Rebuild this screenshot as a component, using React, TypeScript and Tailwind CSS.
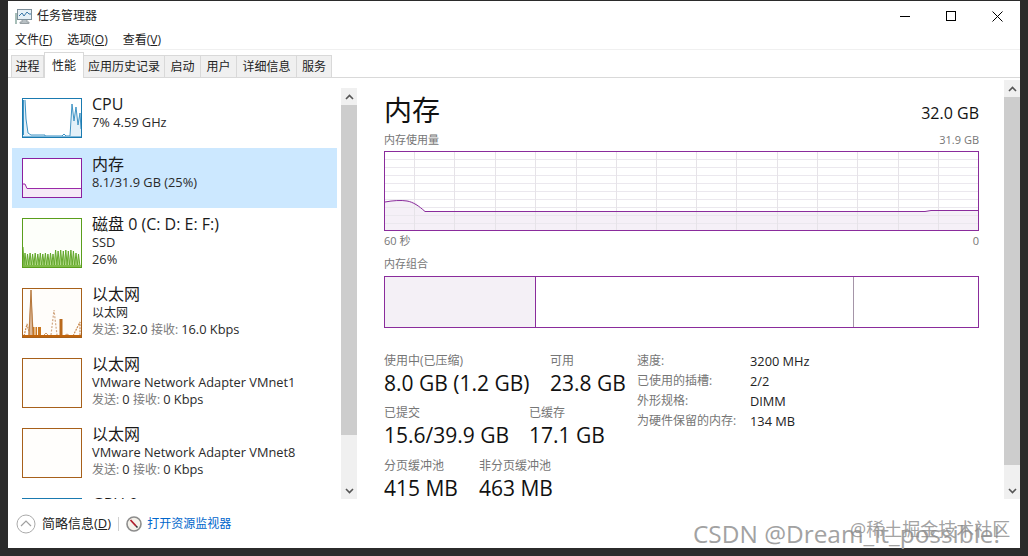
import React from 'react';

const FONT = '"Open Sans", "Noto Sans", "Noto Sans CJK SC", sans-serif';

const tabs = [
  { label: '进程', w: 'w-[33px]' },
  { label: '性能', w: 'w-[40px]', active: true },
  { label: '应用历史记录', w: 'w-[81px]' },
  { label: '启动', w: 'w-[36px]' },
  { label: '用户', w: 'w-[36px]' },
  { label: '详细信息', w: 'w-[60px]' },
  { label: '服务', w: 'w-[35px]' },
];

const AppIcon = () => (
  <svg width="18" height="17" viewBox="0 0 18 17" fill="none">
    <rect x="2.5" y="1.5" width="14" height="10" fill="#e6f0f6" stroke="#7d8f9a" />
    <path d="M4 8l3-3 2 3 3-4 2 2h2" stroke="#3a78a8" strokeWidth="1" />
    <path d="M1 5v11" stroke="#8aa8a0" strokeWidth="1.5" />
    <path d="M7 12v2H5v1.5h9V14h-2v-2" fill="#b8c0c4" stroke="#98a0a4" />
  </svg>
);

const CollapseIcon = () => (
  <svg width="20" height="20" viewBox="0 0 20 20" fill="none">
    <circle cx="10" cy="10" r="9" stroke="#ababab" strokeWidth="1" />
    <path d="M5 12l5-5 5 5" stroke="#a0a0a0" strokeWidth="1.2" />
  </svg>
);

const MonitorIcon = () => (
  <svg width="16" height="16" viewBox="0 0 16 16" fill="none">
    <circle cx="8" cy="8" r="7" fill="#f4f1ea" stroke="#8c8c8c" strokeWidth="1.6" />
    <path d="M4.5 4L10 10" stroke="#b01e2c" strokeWidth="1.8" />
    <path d="M10 10l1.5 1.5" stroke="#30343a" strokeWidth="1.6" />
  </svg>
);

const Spark = ({ h, border, bg, children }: { h: string; border: string; bg: string; children?: React.ReactNode }) => (
  <div className={`w-[60px] ${h} border ${border} ${bg} shrink-0 overflow-hidden`}>{children}</div>
);

const CpuSpark = () => (
  <svg width="58" height="38" viewBox="0 0 58 38" className="block">
    <path d="M0 1L2 1L3 20L5 36L48 37L49 5L51 22L53 8L55 26L57 14L58 30V38H0Z" fill="#e3f0f8" />
    <path d="M0.5 1V36M2 1L3 20L5 34L8 36H22V37H39L41 35L43 37H47L49 5L51 22L53 8L55 26L57 14L58 30" stroke="#3f93c4" strokeWidth="1" fill="none" />
    <path d="M0 37.5H58" stroke="#7db8da" strokeWidth="1" />
  </svg>
);

const MemSpark = () => (
  <svg width="58" height="38" viewBox="0 0 58 38" className="block">
    <path d="M0 25L2 25L4 29H58V38H0Z" fill="#f5e9f7" />
    <path d="M0 25L2 25L4 29.5H58" stroke="#9a2aa8" strokeWidth="1" fill="none" />
  </svg>
);

const DiskSpark = () => {
  let top = 'M0 28L1 46';
  for (let i = 0; i < 22; i++) {
    const x = 2 + i * 2.55;
    const peak = i > 11 && i < 20 ? 31 + (i % 2) : 34 + (i % 2);
    top += `L${x.toFixed(1)} ${peak}L${(x + 1.3).toFixed(1)} 46`;
  }
  return (
    <svg width="58" height="48" viewBox="0 0 58 48" className="block">
      <path d={`${top}V48H0Z`} fill="#b4dc8c" />
      <path d={top} stroke="#64a82c" strokeWidth="1" fill="none" />
      <path d="M0 47H58" stroke="#6eb030" strokeWidth="1.5" />
    </svg>
  );
};

const EthSpark = () => (
  <svg width="58" height="48" viewBox="0 0 58 48" className="block">
    <path d="M5 48L8 1L11 48Z" fill="#dcb898" />
    <path d="M6 47L8 1L10 47" stroke="#b5763a" strokeWidth="1" fill="none" />
    <path d="M10 48V38H18V48Z" fill="#c9761e" />
    <path d="M12 38V48M14.5 38V48" stroke="#fff6ea" strokeWidth="1" />
    <path d="M36.5 48V30H39.5V48Z" fill="#b9691c" />
    <path d="M28 46L31 21L34 46" stroke="#d2a884" strokeWidth="1.2" strokeDasharray="2 1.5" fill="none" />
    <path d="M1 47L4 35L7 47M50 47L53 41L57 33V47" stroke="#c98a50" strokeWidth="1.2" strokeDasharray="2 1" fill="none" />
    <path d="M20 47L23 44L26 47M41 47L44 45L47 47" stroke="#d09a68" strokeWidth="1" fill="none" />
    <path d="M0 47H58" stroke="#c0640c" strokeWidth="2" />
  </svg>
);

const ListItem = ({ spark, h, title, lines, selected }: { spark: React.ReactNode; h: string; title: string; lines: React.ReactNode[]; selected?: boolean }) => (
  <div className={`flex ${h} w-[325px] pl-[10px] pt-[10px] gap-[10px] ${selected ? 'bg-[#cce8ff]' : ''}`}>
    {spark}
    <div className="-mt-[4px] text-[12.8px] leading-[17px] text-[#2a2a2a]">
      <div className="text-[16px] leading-[20px] text-[#1a1a1a]">{title}</div>
      {lines.map((l, i) => (
        <div key={i} className="whitespace-nowrap">{l}</div>
      ))}
    </div>
  </div>
);

const Rate = ({ tx, rx }: { tx: string; rx: string }) => (
  <span>
    <span className="text-[#7a7a7a] text-[12px]">发送: </span>{tx} <span className="text-[#7a7a7a] text-[12px]">接收: </span>{rx} Kbps
  </span>
);

const MemoryGraph = () => {
  const vs = [29, 69, 110, 150, 191, 231, 271, 311, 351, 392, 432, 472, 513, 553];
  const hs = [7, 15, 23, 31, 39, 47, 55, 63, 71];
  return (
    <svg width="593" height="78" viewBox="0 0 593 78" className="block">
      <path d="M0 50L10 49L22 48L30 50L40 59H545L593 58V78H0Z" fill="#f5f0f7" />
      {hs.map((y) => (
        <path key={y} d={`M0 ${y + 0.5}H593`} stroke="#ebe8ee" strokeWidth="1" />
      ))}
      {vs.map((x) => (
        <path key={x} d={`M${x + 0.5} 0V78`} stroke="#e6e3e8" strokeWidth="1" />
      ))}
      <path d="M0 50C8 48.5 16 48 22 49C28 50 34 54 40 59.5H540L546 58.5H593" stroke="#8a2c9c" strokeWidth="1" fill="none" />
    </svg>
  );
};

const Stat = ({ label, value, w }: { label: string; value: string; w: string }) => (
  <div className={w}>
    <div className="text-[12px] leading-[16px] text-[#767676] whitespace-nowrap">{label}</div>
    <div className="text-[21px] leading-[29px] text-[#111] whitespace-nowrap">{value}</div>
  </div>
);

const specs = [
  ['速度:', '3200 MHz'],
  ['已使用的插槽:', '2/2'],
  ['外形规格:', 'DIMM'],
  ['为硬件保留的内存:', '134 MB'],
];

export default function App() {
  return (
    <div className="relative w-[1028px] h-[556px] overflow-hidden bg-[#2b2b2b] pl-2 pt-[1px]" style={{ fontFamily: FONT }}>
      <div className="relative w-[1012px] h-[547px] bg-white flex flex-col">
        {/* title bar */}
        <div className="flex items-center h-[29px] pt-[1px] pl-[7px] shrink-0">
          <AppIcon />
          <span className="ml-[4px] text-[12px] text-[#222]">任务管理器</span>
          <div className="ml-auto flex items-center text-black">
            <div className="w-[46px] h-[28px] flex items-center justify-center">
              <div className="w-[10px] h-px bg-black" />
            </div>
            <div className="w-[46px] h-[28px] flex items-center justify-center">
              <div className="w-[10px] h-[10px] border border-black" />
            </div>
            <div className="w-[46px] h-[28px] flex items-center justify-center">
              <svg width="11" height="11" viewBox="0 0 11 11"><path d="M0.5 0.5L10.5 10.5M10.5 0.5L0.5 10.5" stroke="#000" strokeWidth="1" /></svg>
            </div>
          </div>
        </div>
        {/* menu */}
        <div className="flex h-[20px] items-center pl-[7px] gap-[15px] text-[12px] text-[#222] shrink-0 border-b border-[#f0f0f0]">
          <span>文件(<span className="underline">F</span>)</span>
          <span>选项(<span className="underline">O</span>)</span>
          <span>查看(<span className="underline">V</span>)</span>
        </div>
        {/* tabs */}
        <div className="flex items-end h-[28px] pl-[3px] border-b border-[#d9d9d9] shrink-0">
          {tabs.map((t) =>
            <div
              key={t.label}
              className={`${t.w} flex items-center justify-center text-[12px] text-[#222] border-[#d9d9d9] ${t.active ? 'h-[26px] border-t border-l border-r bg-white -mb-px' : 'h-[22px] border-t border-r first:border-l bg-[#f0f0f0]'}`}
            >
              {t.label}
            </div>
          )}
        </div>
        {/* body */}
        <div className="flex flex-1 min-h-0">
          <div className="w-[350px] shrink-0 flex pl-[4px] pt-[10px] h-[421px]">
            <div className="w-[329px] h-[411px] overflow-hidden shrink-0">
              <ListItem h="h-[60px]" title="CPU" lines={['7% 4.59 GHz']} spark={<Spark h="h-[40px]" border="border-[#1a7ab0]" bg="bg-white"><CpuSpark /></Spark>} />
              <ListItem selected h="h-[60px]" title="内存" lines={['8.1/31.9 GB (25%)']} spark={<Spark h="h-[40px]" border="border-[#8b1fa0]" bg="bg-white"><MemSpark /></Spark>} />
              <ListItem h="h-[70px]" title="磁盘 0 (C: D: E: F:)" lines={['SSD', '26%']} spark={<Spark h="h-[50px]" border="border-[#5a9e1c]" bg="bg-[#fdfffa]"><DiskSpark /></Spark>} />
              <ListItem h="h-[70px]" title="以太网" lines={[<span className="text-[12px]">以太网</span>, <Rate tx="32.0" rx="16.0" />]} spark={<Spark h="h-[50px]" border="border-[#a7601a]" bg="bg-[#fffdfa]"><EthSpark /></Spark>} />
              <ListItem h="h-[70px]" title="以太网" lines={['VMware Network Adapter VMnet1', <Rate tx="0" rx="0" />]} spark={<Spark h="h-[50px]" border="border-[#a7601a]" bg="bg-[#fffefc]" />} />
              <ListItem h="h-[70px]" title="以太网" lines={['VMware Network Adapter VMnet8', <Rate tx="0" rx="0" />]} spark={<Spark h="h-[50px]" border="border-[#a7601a]" bg="bg-[#fffefc]" />} />
              <ListItem h="h-[70px]" title="GPU 0" lines={[]} spark={<Spark h="h-[50px]" border="border-[#1a7ab0]" bg="bg-white" />} />
            </div>
            <div className="w-[16px] h-[411px] bg-[#f0f0f0] flex flex-col shrink-0">
              <div className="h-[17px] flex items-center justify-center">
                <svg width="9" height="6" viewBox="0 0 9 6"><path d="M1 5l3.5-3.5L8 5" stroke="#555" strokeWidth="1.6" fill="none" /></svg>
              </div>
              <div className="h-[330px] bg-[#cdcdcd]" />
              <div className="mt-auto h-[17px] flex items-center justify-center">
                <svg width="9" height="6" viewBox="0 0 9 6"><path d="M1 1l3.5 3.5L8 1" stroke="#555" strokeWidth="1.6" fill="none" /></svg>
              </div>
            </div>
          </div>
          {/* detail */}
          <div className="w-[595px] ml-[26px] pt-[14px] shrink-0">
            <div className="flex items-center justify-between h-[36px]">
              <span className="text-[28px] leading-[36px] text-[#111]">内存</span>
              <span className="text-[16px] text-[#111] mt-[6px]">32.0 GB</span>
            </div>
            <div className="flex justify-between h-[23px] pt-[2px] items-center text-[11px] text-[#767676]">
              <span>内存使用量</span>
              <span>31.9 GB</span>
            </div>
            <div className="h-[80px] border border-[#8a2c9c]">
              <MemoryGraph />
            </div>
            <div className="flex justify-between h-[20px] items-center text-[11px] text-[#767676]">
              <span>60 秒</span>
              <span>0</span>
            </div>
            <div className="h-[25px] pt-[2px] flex items-center text-[11px] text-[#767676]">内存组合</div>
            <div className="flex h-[52px] border border-[#8a2c9c]">
              <div className="w-[151px] bg-[#f4f0f6] border-r border-[#8a2c9c]" />
              <div className="w-[318px] border-r border-[#a595a8]" />
            </div>
            <div className="flex mt-[25px]">
              <div className="w-[253px] shrink-0">
                <div className="flex">
                  <Stat w="w-[166px]" label="使用中(已压缩)" value="8.0 GB (1.2 GB)" />
                  <Stat w="w-[87px]" label="可用" value="23.8 GB" />
                </div>
                <div className="flex mt-[7px]">
                  <Stat w="w-[145px]" label="已提交" value="15.6/39.9 GB" />
                  <Stat w="w-[87px]" label="已缓存" value="17.1 GB" />
                </div>
                <div className="flex mt-[8px]">
                  <Stat w="w-[95px]" label="分页缓冲池" value="415 MB" />
                  <Stat w="w-[87px]" label="非分页缓冲池" value="463 MB" />
                </div>
              </div>
              <div className="text-[12px] leading-[20px] -mt-[2px]">
                {specs.map(([k, v]) => (
                  <div key={k} className="flex">
                    <span className="w-[113px] text-[#767676] whitespace-nowrap">{k}</span>
                    <span className="text-[12.8px] text-[#222]">{v}</span>
                  </div>
                ))}
              </div>
            </div>
          </div>
          <div className="w-[16px] ml-[25px] mt-[2px] h-[419px] bg-[#f0f0f0] flex flex-col shrink-0">
            <div className="h-[17px] flex items-center justify-center">
              <svg width="9" height="6" viewBox="0 0 9 6"><path d="M1 5l3.5-3.5L8 5" stroke="#555" strokeWidth="1.6" fill="none" /></svg>
            </div>
            <div className="h-[368px] bg-[#cdcdcd]" />
            <div className="mt-auto h-[17px] flex items-center justify-center">
              <svg width="9" height="6" viewBox="0 0 9 6"><path d="M1 1l3.5 3.5L8 1" stroke="#555" strokeWidth="1.6" fill="none" /></svg>
            </div>
          </div>
        </div>
        {/* footer */}
        <div className="h-[49px] shrink-0 flex items-center pl-[8px] text-[12px]">
          <CollapseIcon />
          <span className="ml-[6px] text-[13px] text-[#222]">简略信息(<span className="underline">D</span>)</span>
          <div className="w-px h-[14px] bg-[#d0d0d0] ml-[7px] mr-[7px]" />
          <MonitorIcon />
          <span className="ml-[5px] text-[#0066cc]">打开资源监视器</span>
        </div>
      </div>
      {/* watermarks */}
      <span className="absolute left-[693px] top-[519px] text-[24.4px] leading-[30px] text-[#a2a2a2] whitespace-nowrap">CSDN @Dream_it_possible!</span>
      <span className="absolute left-[850px] top-[517px] text-[18px] leading-[24px] text-[#8a8a8a]/80 whitespace-nowrap">@稀土掘金技术社区</span>
    </div>
  );
}
